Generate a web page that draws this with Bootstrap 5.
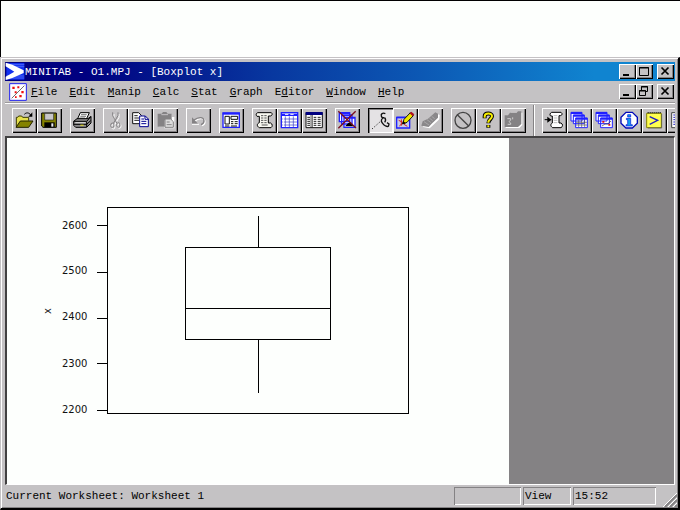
<!DOCTYPE html>
<html lang="en">
<head>
<meta charset="utf-8">
<meta name="viewport" content="width=device-width, initial-scale=1">
<title>MINITAB - O1.MPJ - [Boxplot x]</title>
<link href="https://cdn.jsdelivr.net/npm/bootstrap@5.3.0/dist/css/bootstrap.min.css" rel="stylesheet">
<style>
body{font-family:"Liberation Mono",monospace;font-size:11px;line-height:16px;color:#000;background:#fff}
.desk-top{height:57px;border-top:1px solid #000;border-left:1px solid #000;background:#fdfffd}
.app-window{background:#c4c2c4;border:solid;border-width:1px 2px 2px 1px;border-color:#c4c2c4 #000 #000 #c4c2c4;box-shadow:inset 1px 1px #fff,inset -1px -1px #848284}
.title-bar{height:19px;margin:4px 3px 0 4px;background:linear-gradient(90deg,#000080 12%,#0838a0 40%,#0c58b4 62%,#1084d0 88%);color:#fff}
.menu-bar{height:22px;margin:0 3px 0 4px;border-bottom:1px solid #9c9a9c}
.menu-bar a{color:#000;text-decoration:none}
.menu-list{gap:12px}
.tool-bar{height:33px;margin:0 3px 0 4px;padding:4px 0 0 7px;border-top:1px solid #fff}
.tool-set{gap:8px}
.tool-btn{width:25px;height:25px;padding:0;border:0;background:#c4c2c4;box-shadow:inset 1px 1px #fff,inset -1px -1px #000,inset -2px -2px #848284}
.tool-btn.pressed{background:#e4e2e4;box-shadow:inset 1px 1px #000,inset 2px 2px #848284,inset -1px -1px #fff}
.tool-btn svg,.win-btn svg{display:block}
.tool-sep{width:2px;height:31px;margin:-3px 7px 0 7px;background:linear-gradient(90deg,#848284 50%,#fff 50%)}
.win-btn{width:17px;height:15px;padding:0;border:0;background:#c4c2c4;box-shadow:inset 1px 1px #fff,inset -1px -1px #000,inset -2px -2px #848284}
.win-set{padding-right:1px}
.client-area{margin:0 3px 0 4px;border:solid;border-width:2px 1px 1px 2px;border-color:#424142 #fff #fff #424142}
.graph-pane{flex:503 1 0;background:#fdfffd;min-width:0}
.back-pane{flex:165 1 0;background:#848284}
.graph-pane text{font-family:"DejaVu Sans",sans-serif;font-size:10px;fill:#111}
.status-bar{height:23px;padding:2px 0 0 5px;gap:2px}
.status-cell{height:18px;line-height:18px;padding-left:2px;box-shadow:inset 1px 1px #848284,inset -1px -1px #fff}
.cell-a{width:67px}.cell-b{width:48px}.cell-c{width:83px}
</style>
<script src="https://cdn.jsdelivr.net/npm/bootstrap@5.3.0/dist/js/bootstrap.bundle.min.js"></script>
</head>
<body class="d-flex flex-column min-vh-100">
<div class="desk-top"></div>
<main class="app-window d-flex flex-column flex-grow-1">
  <header class="title-bar d-flex align-items-center">
    <svg width="20" height="19" viewBox="0 0 60 57" aria-hidden="true"><path d="M4 3h54v50H4z" fill="#1030f0"/><path d="M4 8h54M4 14h54M4 42h54M4 48h54" stroke="#c8d0ff" stroke-width="1"/><path d="M2 2L22 8 56 25v8L22 48 2 54V44L28 29 2 13z" fill="#fff"/></svg>
    <span class="text-nowrap flex-grow-1">MINITAB - O1.MPJ - [Boxplot x]</span>
    <div class="win-set d-flex">
      <button class="win-btn" aria-label="Minimize"><svg width="17" height="15"><path d="M4 11h6" stroke="#000" stroke-width="2"/></svg></button>
      <button class="win-btn me-1" aria-label="Maximize"><svg width="17" height="15"><path d="M3.500 3.500h9v8h-9zM3 4h10" fill="none" stroke="#000"/></svg></button>
      <button class="win-btn" aria-label="Close"><svg width="17" height="15"><path d="M4.500 3.500l7 7M11.500 3.500l-7 7" stroke="#000" stroke-width="1.700"/></svg></button>
    </div>
  </header>
  <nav class="menu-bar d-flex align-items-center" aria-label="Main menu">
    <svg class="ms-1 me-1" width="18" height="18" viewBox="0 0 54 54" aria-hidden="true"><path d="M2 2h50v50H2z" fill="#fff" stroke="#2020f0" stroke-width="3"/><path d="M8 46L46 8" stroke="#222" stroke-width="2"/><path d="M10 11h7v7h-7zM25 10h6v6h-6zM17 25h6v6h-6zM37 24h7v7h-7zM31 36h7v7h-7zM18 40h5v5h-5z" fill="#f01010"/></svg>
    <div class="menu-list d-flex flex-grow-1">
      <a href="#"><u>F</u>ile</a><a href="#"><u>E</u>dit</a><a href="#"><u>M</u>anip</a><a href="#"><u>C</u>alc</a><a href="#"><u>S</u>tat</a><a href="#"><u>G</u>raph</a><a href="#">E<u>d</u>itor</a><a href="#"><u>W</u>indow</a><a href="#"><u>H</u>elp</a>
    </div>
    <div class="win-set d-flex">
      <button class="win-btn" aria-label="Minimize graph"><svg width="17" height="15"><path d="M4 11h6" stroke="#000" stroke-width="2"/></svg></button>
      <button class="win-btn me-1" aria-label="Restore graph"><svg width="17" height="15"><path d="M5.500 6V2.500h6v5H9.500M5 3h7M3.500 6.500h6v5h-6zM3 7h7" fill="none" stroke="#000"/></svg></button>
      <button class="win-btn" aria-label="Close graph"><svg width="17" height="15"><path d="M4.500 3.500l7 7M11.500 3.500l-7 7" stroke="#000" stroke-width="1.700"/></svg></button>
    </div>
  </nav>
  <div class="tool-bar d-flex overflow-hidden" role="toolbar" aria-label="Tools">
    <div class="tool-set d-flex flex-shrink-0">
      <div class="d-flex">
        <button class="tool-btn" aria-label="Open"><svg width="25" height="25" viewBox="0 0 75 75"><path d="M13 56V28h4l3-4h9l3 4h18v10" fill="#e6e04c" stroke="#3a3a00" stroke-width="3"/><path d="M12 58L25 39h38L50 58z" fill="#848200" stroke="#202000" stroke-width="3"/><path d="M37 19c5-6 14-6 19 2" fill="none" stroke="#000" stroke-width="3"/><path d="M61 13v13H49z"/></svg></button>
        <button class="tool-btn" aria-label="Save"><svg width="25" height="25" viewBox="0 0 75 75"><path d="M14 15h44v43H18l-4-4z" fill="#848200" stroke="#000" stroke-width="3"/><path d="M23 16h27v20H23z" fill="#c8c6c8" stroke="#222" stroke-width="2"/><path d="M22 43h31v15H22z"/><path d="M43 46h6v10h-6z" fill="#eee"/></svg></button>
      </div>
      <button class="tool-btn" aria-label="Print"><svg width="25" height="25" viewBox="0 0 75 75"><path d="M22 34L31 14h27l-9 20z" fill="#fff" stroke="#000" stroke-width="3"/><path d="M33 20h17M31 25h17M28 30h17" stroke="#333" stroke-width="2"/><path d="M11 40l10-8h33l9-7v20L50 58H17l-6-6z" fill="#8a888a" stroke="#000" stroke-width="3"/><path d="M11 40h39l12-13M12 49h38l12-11M50 41v16" fill="none" stroke="#000" stroke-width="3"/><path d="M16 44h31" stroke="#ddd" stroke-width="3"/><path d="M31 50h10v3H31z" fill="#f0e820"/></svg></button>
      <div class="d-flex">
        <button class="tool-btn" aria-label="Cut"><svg width="25" height="25" viewBox="0 0 75 75"><g fill="none" stroke-width="3"><path d="M30 15v10l13 23M45 15v10L32 48" stroke="#fff" transform="translate(3 3)"/><ellipse cx="31" cy="56" rx="5" ry="7" stroke="#fff"/><ellipse cx="49" cy="54" rx="5" ry="7" stroke="#fff"/><path d="M29 13v10l13 23M45 13v10L31 46" stroke="#848284"/><ellipse cx="28" cy="52" rx="5" ry="7" stroke="#848284"/><ellipse cx="46" cy="51" rx="5" ry="7" stroke="#848284"/></g></svg></button>
        <button class="tool-btn" aria-label="Copy"><svg width="25" height="25" viewBox="0 0 75 75"><path d="M14 14h18l8 8v25H14z" fill="#fff" stroke="#111" stroke-width="3"/><path d="M19 23h10M19 30h14M19 37h14" stroke="#222" stroke-width="3"/><path d="M35 24h17l9 9v23H35z" fill="#fff" stroke="#000090" stroke-width="3"/><path d="M51 24v10h10M40 33h8M40 40h15M40 47h15" fill="none" stroke="#000090" stroke-width="3"/></svg></button>
        <button class="tool-btn" aria-label="Paste"><svg width="25" height="25" viewBox="0 0 75 75"><path d="M17 19h39v8h8v34H34v-4H17z" fill="#fff"/><path d="M14 17h12l4-5h10l4 5h12v20H35v19H14z" fill="#848284"/><path d="M25 20h20" stroke="#c4c2c4" stroke-width="3"/><path d="M36 33h17l8 8v17H36z" fill="#ddd" stroke="#848284" stroke-width="3"/><path d="M41 42h9M41 50h15" stroke="#848284" stroke-width="3"/></svg></button>
      </div>
      <button class="tool-btn" aria-label="Undo"><svg width="25" height="25" viewBox="0 0 75 75"><g fill="none" stroke-width="4"><path d="M24 36c16-12 30-8 30 3 0 6-4 9-9 11" stroke="#fff" transform="translate(3 3)"/><path d="M24 36c16-12 30-8 30 3 0 6-4 9-9 11" stroke="#848284"/></g><path d="M18 28v19h18z" fill="#848284"/><path d="M18 49h21" stroke="#fff" stroke-width="3"/></svg></button>
      <button class="tool-btn" aria-label="Session window"><svg width="25" height="25" viewBox="0 0 75 75"><path d="M12 15h49v43H12z" fill="#fff" stroke="#2020ff" stroke-width="4"/><path d="M11 17h51" stroke="#2020ff" stroke-width="6"/><path d="M18 25h13v23H18zM36 25h20v9H36z" fill="#fff" stroke="#111" stroke-width="3"/><path d="M36 41h7M47 41h9M36 47h7M47 47h9M18 54h13M36 54h18" stroke="#111" stroke-width="3"/></svg></button>
      <div class="d-flex">
        <button class="tool-btn" aria-label="Session"><svg width="25" height="25" viewBox="0 0 75 75"><path d="M17 14h41c4 3 3 9-3 10h-6v21h7c6 3 6 11 1 14H22c-8-4-8-12 0-15V25h-7c-4-4-3-9 2-11z" fill="#f8f8f0" stroke="#000" stroke-width="3"/><path d="M27 23h7M37 23h7M27 30h7M37 30h7M27 37h7M37 37h7M27 44h7M37 44h7M29 51h18" stroke="#555" stroke-width="3"/></svg></button>
        <button class="tool-btn" aria-label="Worksheet"><svg width="25" height="25" viewBox="0 0 75 75"><path d="M13 14h49v45H13z" fill="#fff" stroke="#2020ff" stroke-width="4"/><path d="M12 17h51v7H12z" fill="#2020ff"/><path d="M24 19h10M40 19h10" stroke="#fff" stroke-width="3"/><path d="M25 25v33M37 25v33M49 25v33M13 33h48M13 42h48M13 51h48" stroke="#3438c8" stroke-width="2"/><path d="M19 24v32" stroke="#fff" stroke-width="3"/></svg></button>
        <button class="tool-btn" aria-label="Project manager"><svg width="25" height="25" viewBox="0 0 75 75"><path d="M12 14h49v45H12z" fill="#fff" stroke="#111" stroke-width="3"/><path d="M11 12h51v9H11z" fill="#000080"/><path d="M27 21v37M31 21v37" stroke="#111" stroke-width="2"/><path d="M16 28h8M16 34h8M16 40h8M16 46h8M16 52h8M35 28h8M47 28h9M35 34h8M47 34h9M35 40h8M47 40h9M35 46h8M47 46h9M35 52h8M47 52h9" stroke="#222" stroke-width="3"/></svg></button>
      </div>
      <button class="tool-btn" aria-label="Close all graphs"><svg width="25" height="25" viewBox="0 0 75 75"><path d="M13 14h31v27H13zM20 21h31v27H20zM27 28h33v30H27z" fill="#fff" stroke="#2020ff" stroke-width="4"/><path d="M13 16h31M20 23h31M27 30h33" stroke="#2020ff" stroke-width="4"/><path d="M30 55l9-9 8-4 4 5 6 8z"/><path d="M10 10l53 50M62 10L10 61" stroke="#7c1020" stroke-width="4"/></svg></button>
      <div class="d-flex">
        <button class="tool-btn pressed" aria-label="Select mode"><svg width="25" height="25" viewBox="0 0 75 75"><path d="M12 63l27-24" stroke="#333" stroke-width="3" stroke-dasharray="4 5"/><path d="M52 17c-8-4-14 1-12 7 1 5 5 6 9 5-10 2-11 10-6 16 4 6 10 12 18 10M50 29c4 5 4 9 0 14M57 44l6 4-2 8" fill="none" stroke="#111" stroke-width="4"/></svg></button>
        <button class="tool-btn" aria-label="Edit graph"><svg width="25" height="25" viewBox="0 0 75 75"><path d="M11 29h39v31H11z" fill="#c8cce8" stroke="#2020ff" stroke-width="4"/><path d="M10 28h40" stroke="#2020ff" stroke-width="5"/><path d="M17 37l12 6M19 54l10-9M33 49l10 6M25 34v19" stroke="#d02020" stroke-width="3"/><path d="M29 48l4-14 19-20 9 9-19 20z" fill="#f0e800" stroke="#111" stroke-width="3"/><path d="M50 16l5-5 9 8-5 6z" fill="#b01020"/><path d="M28 49l3-10 7 7z"/></svg></button>
        <button class="tool-btn" aria-label="Brush"><svg width="25" height="25" viewBox="0 0 75 75"><path d="M15 57l5-14 17-8 20-18 8 4-1 13-19 18-10 9z" fill="#fff"/><path d="M10 53l4-13 16-8 22-19 8 4v12L41 47l-9 10z" fill="#8a888a"/><path d="M18 41l15 10M27 35l12 9M34 30l10 8M41 25l9 7" stroke="#b8b6b8" stroke-width="2"/></svg></button>
      </div>
      <div class="d-flex">
        <button class="tool-btn" aria-label="Cancel"><svg width="25" height="25" viewBox="0 0 75 75"><circle cx="36" cy="37" r="24" fill="none" stroke="#444" stroke-width="4"/><path d="M19 20l34 34" stroke="#444" stroke-width="4"/></svg></button>
        <button class="tool-btn" aria-label="Help"><svg width="25" height="25" viewBox="0 0 75 75"><g fill="none"><path d="M26 31v-6c0-11 22-11 22-1 0 10-11 10-11 22M37 51v8" stroke="#000" stroke-width="12"/><path d="M26 29v-4c0-11 22-11 22-1 0 10-11 10-11 20M37 52v6" stroke="#f8f000" stroke-width="6"/></g></svg></button>
        <button class="tool-btn" aria-label="StatGuide"><svg width="25" height="25" viewBox="0 0 75 75"><path d="M14 23h8l8-9h34v37l-9 9H14z" fill="#fff"/><path d="M11 22h10l6-8h20l4-4h10v38l-10 9H11z" fill="#848284"/><path d="M19 32h10v4l-5 5 5 4v4H20M35 28v6" fill="none" stroke="#ccc" stroke-width="3"/></svg></button>
      </div>
    </div>
    <div class="tool-sep flex-shrink-0"></div>
    <button class="tool-btn flex-shrink-0" aria-label="Append to session"><svg width="25" height="25" viewBox="0 0 75 75"><path d="M29 13h28c5 3 4 9-2 10h-4v22h6c6 3 6 11 0 14H32c-7-4-7-11-1-14V24h-5c-4-3-2-9 3-11z" fill="#fff" stroke="#000" stroke-width="3"/><path d="M35 23h11M35 30h11M35 37h11M35 44h11" stroke="#999" stroke-width="2"/><path d="M8 35h20" stroke="#000" stroke-width="3"/><path d="M16 26l12 9-12 9z"/></svg></button>
    <button class="tool-btn flex-shrink-0" aria-label="Worksheets folder"><svg width="25" height="25" viewBox="0 0 75 75"><path d="M12 13h33v26H12zM19 21h33v26H19zM26 30h35v29H26z" fill="#fff" stroke="#2020ff" stroke-width="3"/><path d="M12 15h33M19 23h33M26 32h35" stroke="#2020ff" stroke-width="6"/><path d="M35 36v22M44 36v22M53 36v22M27 43h33M27 51h33" stroke="#555" stroke-width="2"/></svg></button>
    <button class="tool-btn flex-shrink-0" aria-label="Graphs folder"><svg width="25" height="25" viewBox="0 0 75 75"><path d="M12 13h33v26H12zM19 21h33v26H19zM26 30h35v29H26z" fill="#fff" stroke="#2020ff" stroke-width="3"/><path d="M12 15h33M19 23h33M26 32h35" stroke="#2020ff" stroke-width="6"/><path d="M30 54l9-6h8l10-9" fill="none" stroke="#333" stroke-width="2"/><path d="M31 39h6v5h-6zM49 48h6v5h-6z" fill="#e01010"/></svg></button>
    <button class="tool-btn flex-shrink-0" aria-label="Information"><svg width="25" height="25" viewBox="0 0 75 75"><path d="M27 13h19l15 15v18L46 60H27L12 46V28z" fill="#fff" stroke="#0008b8" stroke-width="4"/><path d="M32 20h9v7h-9zM28 31h13v19h5v4H27v-4h5V35h-4z" fill="#10a0f0" stroke="#0010d8" stroke-width="2"/></svg></button>
    <button class="tool-btn flex-shrink-0" aria-label="History"><svg width="25" height="25" viewBox="0 0 75 75"><path d="M14 16h44v43H14z" fill="#ffff50" stroke="#848200" stroke-width="3"/><path d="M17 14h40" stroke="#111" stroke-width="4" stroke-dasharray="3 3"/><path d="M23 26l24 11-24 12" fill="none" stroke="#2020c0" stroke-width="4"/><path d="M59 18v42H18" fill="none" stroke="#555" stroke-width="2"/></svg></button>
    <button class="tool-btn flex-shrink-0" aria-label="Report"><svg width="25" height="25" viewBox="0 0 75 75"><path d="M14 14h43v45H14z" fill="#fff" stroke="#444" stroke-width="3"/><path d="M19 21h30M19 28h30M19 35h30M19 42h30M19 49h30" stroke="#2020c0" stroke-width="3"/></svg></button>
  </div>
  <section class="client-area d-flex flex-grow-1">
    <div class="graph-pane">
      <svg class="d-block" width="503" height="344" viewBox="0 0 503 344" role="img" aria-label="Boxplot of x">
        <g fill="none" stroke="#000" shape-rendering="crispEdges">
          <path d="M100.500 69.500h301v206h-301z"/>
          <path d="M90 87.500h10M90 134.500h10M90 180.500h10M90 225.500h10M90 272.500h10"/>
          <path d="M178.500 109.500h145v92h-145zM178 170.500h146M251.500 78v31M251.500 201v54"/>
        </g>
        <text x="55" y="91">2600</text><text x="55" y="136">2500</text><text x="55" y="182">2400</text><text x="55" y="229">2300</text><text x="55" y="275">2200</text>
        <text transform="translate(44 176) rotate(-90)">x</text>
      </svg>
    </div>
    <div class="back-pane"></div>
  </section>
  <footer class="status-bar d-flex">
    <span class="flex-grow-1 pt-1 lh-1">Current Worksheet: Worksheet 1</span>
    <div class="status-cell cell-a"></div>
    <div class="status-cell cell-b">View</div>
    <div class="status-cell cell-c">15:52</div>
    <svg class="mt-auto ms-1" width="16" height="18" aria-hidden="true"><path d="M3 17L15 5M8 17l7-7M13 17l2-2" stroke="#848284" stroke-width="2"/><path d="M1 17L15 3M6 17l9-9M11 17l4-4" stroke="#fff"/></svg>
  </footer>
</main>
</body>
</html>
